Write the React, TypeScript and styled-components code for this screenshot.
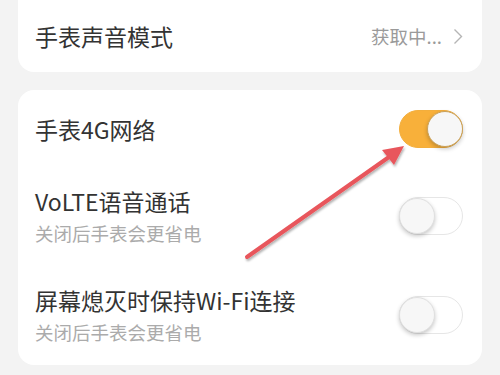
import styled, { createGlobalStyle } from 'styled-components';

const GlobalStyle = createGlobalStyle`
	html, body {
		margin: 0;
		padding: 0;
		background: #f3f3f3;
	}

	body {
		font-family: "Noto Sans CJK SC", "Noto Sans", sans-serif;
		color: #333;
	}
`;

const Page = styled.div`
	position: relative;
	width: 500px;
	height: 375px;
	overflow: hidden;
	padding: 0 18px;
	box-sizing: border-box;
	background: #f3f3f3;
`;

const Card = styled.div<{ $top?: number; $cut?: boolean }>`
	background: #fff;
	margin-top: ${(props) => props.$top ?? 0}px;
	border-radius: ${(props) => (props.$cut ? '0 0 16px 16px' : '16px')};
	padding: 0 19px 0 17px;
`;

const Row = styled.div<{ $height: number }>`
	display: flex;
	align-items: center;
	justify-content: space-between;
	height: ${(props) => props.$height}px;
`;

const Texts = styled.div`
	display: flex;
	flex-direction: column;
`;

const Title = styled.div`
	font-size: 23px;
	line-height: 28px;
	font-weight: 400;
	color: #333;
`;

const Sub = styled.div`
	font-size: 18.5px;
	line-height: 22px;
	margin-top: 7px;
	color: #ababab;
`;

const Value = styled.div`
	display: flex;
	align-items: center;
	gap: 11px;
	font-size: 18.5px;
	color: #9a9a9a;
`;

const Switch = styled.div<{ $on?: boolean }>`
	position: relative;
	width: 64px;
	height: 38px;
	border-radius: 19px;
	box-sizing: border-box;
	background: ${(props) => (props.$on ? '#f8b03a' : '#fff')};
	border: 1.5px solid ${(props) => (props.$on ? '#f3ae3c' : '#e6e6e6')};
	flex-shrink: 0;

	&::after {
		content: '';
		position: absolute;
		top: 0;
		left: ${(props) => (props.$on ? '27px' : '-1px')};
		width: 34px;
		height: 34px;
		border-radius: 50%;
		background: #f7f7f7;
		border: 1px solid ${(props) => (props.$on ? '#c9a15a' : '#e0e0e0')};
		box-shadow: 0 2px 4px rgba(0, 0, 0, 0.22);
	}
`;

const Arrow = styled.svg`
	position: absolute;
	left: 230px;
	top: 130px;
	overflow: visible;
`;

const Chevron = () => (
	<svg width="10" height="17" viewBox="0 0 10 17">
		<path d="M1.5 1.5 L8.5 8.5 L1.5 15.5" fill="none" stroke="#b5b5b5" strokeWidth="1.4" />
	</svg>
);

const App = () => {
	return (
		<>
			<GlobalStyle />
			<Page>
				<Card $cut>
					<Row $height={72}>
						<Title>手表声音模式</Title>
						<Value>
							获取中...
							<Chevron />
						</Value>
					</Row>
				</Card>
				<Card $top={18}>
					<Row $height={77}>
						<Title>手表4G网络</Title>
						<Switch $on />
					</Row>
					<Row $height={97}>
						<Texts>
							<Title>VoLTE语音通话</Title>
							<Sub>关闭后手表会更省电</Sub>
						</Texts>
						<Switch />
					</Row>
					<Row $height={101}>
						<Texts>
							<Title>屏幕熄灭时保持Wi-Fi连接</Title>
							<Sub>关闭后手表会更省电</Sub>
						</Texts>
						<Switch />
					</Row>
				</Card>
				<Arrow width="190" height="145" viewBox="0 0 190 145">
					<defs>
						<filter id="sh" x="-20%" y="-20%" width="140%" height="140%">
							<feDropShadow dx="1" dy="2" stdDeviation="1.2" floodColor="#000" floodOpacity="0.3" />
						</filter>
					</defs>
					<g filter="url(#sh)">
						<line x1="17" y1="127" x2="159" y2="27" stroke="#e8575c" strokeWidth="4" strokeLinecap="round" />
						<polygon points="174,16 164,35 152,20" fill="#e8575c" />
					</g>
				</Arrow>
			</Page>
		</>
	);
};

export default App;
